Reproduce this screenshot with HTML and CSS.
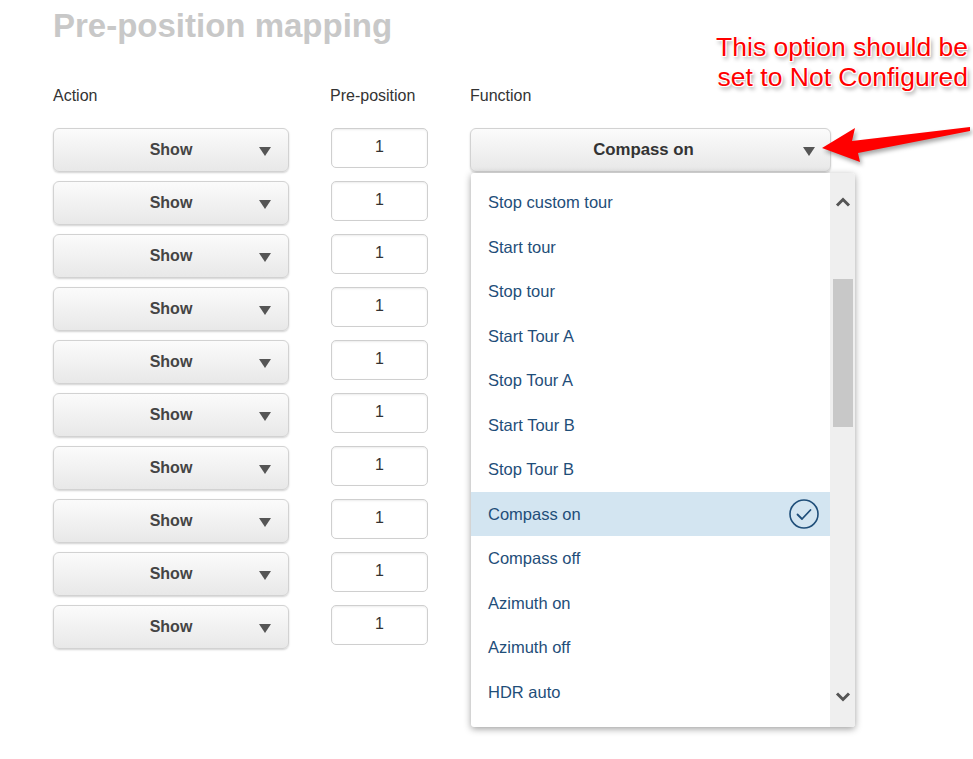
FILE: index.html
```html
<!DOCTYPE html>
<html lang="en">
<head>
    <meta charset="UTF-8">
    <title>Pre-position mapping</title>
    <link rel="stylesheet" href="styles.css">
</head>
<body>

<div class="page">
    <h1 class="title">Pre-position mapping</h1>

    <div class="grid">
        <div class="col col-action">
            <div class="label">Action</div>
            <div class="select"><span class="select-text">Show</span><span class="caret"></span></div>
            <div class="select"><span class="select-text">Show</span><span class="caret"></span></div>
            <div class="select"><span class="select-text">Show</span><span class="caret"></span></div>
            <div class="select"><span class="select-text">Show</span><span class="caret"></span></div>
            <div class="select"><span class="select-text">Show</span><span class="caret"></span></div>
            <div class="select"><span class="select-text">Show</span><span class="caret"></span></div>
            <div class="select"><span class="select-text">Show</span><span class="caret"></span></div>
            <div class="select"><span class="select-text">Show</span><span class="caret"></span></div>
            <div class="select"><span class="select-text">Show</span><span class="caret"></span></div>
            <div class="select"><span class="select-text">Show</span><span class="caret"></span></div>
        </div>

        <div class="col col-preset">
            <div class="label">Pre-position</div>
            <div class="preset">1</div>
            <div class="preset">1</div>
            <div class="preset">1</div>
            <div class="preset">1</div>
            <div class="preset">1</div>
            <div class="preset">1</div>
            <div class="preset">1</div>
            <div class="preset">1</div>
            <div class="preset">1</div>
            <div class="preset">1</div>
        </div>

        <div class="col col-function">
            <div class="label">Function</div>
            <div class="select select-function"><span class="select-text">Compass on</span><span class="caret"></span></div>

            <!-- open dropdown of the first function select -->
            <div class="dropdown">
                <ul class="options">
                    <li>Stop custom tour</li>
                    <li>Start tour</li>
                    <li>Stop tour</li>
                    <li>Start Tour A</li>
                    <li>Stop Tour A</li>
                    <li>Start Tour B</li>
                    <li>Stop Tour B</li>
                    <li class="selected">Compass on
                        <svg class="check" width="32" height="32" viewBox="0 0 32 32">
                            <circle cx="16" cy="16" r="14" fill="none" stroke="#1f4e79" stroke-width="1.6"/>
                            <path d="M9.5 16.5 L14 21 L22.5 12" fill="none" stroke="#1f4e79" stroke-width="1.8" stroke-linecap="round" stroke-linejoin="round"/>
                        </svg>
                    </li>
                    <li>Compass off</li>
                    <li>Azimuth on</li>
                    <li>Azimuth off</li>
                    <li>HDR auto</li>
                </ul>
                <div class="scrollbar">
                    <svg class="chev" width="16" height="10" viewBox="0 0 16 10">
                        <path d="M2 8.5 L8 2.5 L14 8.5" fill="none" stroke="#555" stroke-width="3"/>
                    </svg>
                    <div class="thumb"></div>
                    <div class="spacer"></div>
                    <svg class="chev" width="16" height="10" viewBox="0 0 16 10">
                        <path d="M2 1.5 L8 7.5 L14 1.5" fill="none" stroke="#555" stroke-width="3"/>
                    </svg>
                </div>
            </div>
        </div>
    </div>
</div>

<!-- red callout drawn on top of the form -->
<div class="note">This option should be<br>set to Not Configured</div>
<svg class="note-arrow" width="160" height="45" viewBox="0 0 160 45">
    <polygon points="2,24 35,4 32,17 150,3 150,7 38,29 40,38" fill="#ff0000"/>
</svg>

</body>
</html>
```

FILE: styles.css
```css
body {
    margin: 0;
    background-color: #ffffff;
    font-family: "Liberation Sans", Arial, sans-serif;
    color: #333333;
}
.page {
    min-height: 759px;
    box-sizing: border-box;
    padding: 8px 0 0 53px;
}
.title {
    margin: 0;
    font-size: 33px;
    line-height: 36px;
    font-weight: bold;
    color: #c8c8c8;
}
.grid {
    display: flex;
    gap: 42px;
    margin-top: 42px;
}
.col {
    display: flex;
    flex-direction: column;
    gap: 9px;
}
.col-action {
    width: 236px;
}
.col-preset {
    width: 97px;
}
.col-function {
    width: 361px;
    position: relative;
}
.label {
    font-size: 16px;
    line-height: 20px;
    height: 20px;
    margin-bottom: 13px;
    color: #333333;
}
.col-preset .label {
    margin-left: -1px;
}
.select {
    position: relative;
    height: 44px;
    box-sizing: border-box;
    border: 1px solid #d2d2d2;
    border-radius: 6px;
    background: linear-gradient(#fbfbfb, #e8e8e8);
    box-shadow: 0 1px 2px rgba(0, 0, 0, 0.18);
    display: flex;
    align-items: center;
    justify-content: center;
    font-size: 16px;
    font-weight: bold;
    color: #444444;
}
.select-function {
    padding-right: 14px;
    font-size: 16.8px;
    color: #333333;
}
.caret {
    position: absolute;
    right: 17px;
    top: 18px;
    width: 0;
    height: 0;
    border-left: 6px solid transparent;
    border-right: 6px solid transparent;
    border-top: 9px solid #555555;
}
.select-function .caret {
    right: 15px;
}
.preset {
    height: 40px;
    margin-bottom: 4px;
    box-sizing: border-box;
    border: 1px solid #cfcfcf;
    border-radius: 5px;
    background-color: #ffffff;
    box-shadow: inset 0 1px 2px rgba(0, 0, 0, 0.08);
    text-align: center;
    font-size: 16px;
    line-height: 36px;
    color: #333333;
}
.dropdown {
    position: absolute;
    top: 87px;
    left: 1px;
    width: 384px;
    height: 554px;
    display: flex;
    background-color: #ffffff;
    border-radius: 3px;
    box-shadow: 0 2px 7px rgba(0, 0, 0, 0.38);
    overflow: hidden;
    z-index: 2;
}
.options {
    list-style: none;
    margin: 0;
    padding: 7px 0 0 0;
    flex: 1;
}
.options li {
    position: relative;
    height: 44.5px;
    line-height: 44.5px;
    padding-left: 17px;
    font-size: 16.5px;
    color: #1f4e79;
}
.options li.selected {
    background-color: #d3e5f1;
}
.check {
    position: absolute;
    right: 10px;
    top: 6px;
}
.scrollbar {
    width: 25px;
    background-color: #efefef;
    display: flex;
    flex-direction: column;
    align-items: center;
    padding: 24px 0 25px 0;
    box-sizing: border-box;
}
.chev {
    flex: none;
}
.thumb {
    width: 20px;
    height: 148px;
    margin-top: 72px;
    background-color: #c8c8c8;
    flex: none;
}
.spacer {
    flex: 1;
}
.note {
    position: absolute;
    top: 32px;
    right: 5px;
    text-align: right;
    font-size: 26.5px;
    line-height: 30px;
    color: #ff0000;
    text-shadow: -1px -1px 0 #fff, 1px -1px 0 #fff, -1px 1px 0 #fff, 1px 1px 0 #fff,
        2px 3px 4px rgba(0, 0, 0, 0.45);
}
.note-arrow {
    position: absolute;
    left: 820px;
    top: 124px;
    filter: drop-shadow(2px 3px 2px rgba(0, 0, 0, 0.35));
}
```
